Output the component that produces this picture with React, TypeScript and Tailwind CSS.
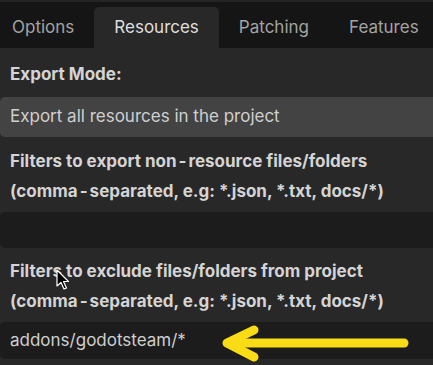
import React from 'react';

const tabs = ['Options', 'Resources', 'Patching', 'Features'];

const Hyphen = () => <span className="mx-[2px]">-</span>;

export default function App() {
  return (
    <div
      className="relative h-[365px] w-[433px] overflow-hidden bg-[#282828] text-[17px]"
      style={{ fontFamily: 'Inter, "Noto Sans", sans-serif' }}
    >
      {/* tab strip */}
      <div className="h-[2px] bg-[#242424]" />
      <div className="flex h-[46px] items-end bg-[#151515]">
        {tabs.map((t, i) =>
          t === 'Resources' ? (
            <div
              key={t}
              className="flex h-[41px] items-center whitespace-nowrap rounded-t-[5px] bg-[#282828] px-[20px] text-[#dedede]"
            >
              {t}
            </div>
          ) : (
            <div
              key={t}
              className={`flex h-[41px] items-center whitespace-nowrap px-[20px] text-[#a3a3a3] ${i === 0 ? '-ml-[8px]' : ''}`}
            >
              {t}
            </div>
          )
        )}
      </div>

      {/* content */}
      <div className="flex flex-col pt-[11px]">
        <div className="px-[10px] font-bold leading-[30px] text-[#d4d4d4]">Export Mode:</div>
        <div className="mt-[8px] flex h-[40px] items-center rounded-l-[5px] bg-[#434343] px-[10px] text-[#cfcfcf]">
          Export all resources in the project
        </div>

        <div className="mt-[9px] px-[10px] font-bold leading-[30px] text-[#d4d4d4]">
          <div>
            Filters to export non<Hyphen />resource files/folders
          </div>
          <div>
            (comma<Hyphen />separated, e.g: *.json, *.txt, docs/*)
          </div>
        </div>
        <div className="mt-[6px] h-[36px] rounded-l-[5px] bg-[#1c1c1c]" />

        <div className="mt-[8px] px-[10px] font-bold leading-[30px] text-[#d4d4d4]">
          <div>Filters to exclude files/folders from project</div>
          <div>
            (comma<Hyphen />separated, e.g: *.json, *.txt, docs/*)
          </div>
        </div>
        <div className="mt-[6px] flex h-[37px] items-center rounded-l-[5px] bg-[#1c1c1c] px-[10px] text-[#cfcfcf]">
          addons/godotsteam/*
        </div>
      </div>

      {/* mouse cursor */}
      <svg className="absolute left-[56px] top-[269px]" width="14" height="22" viewBox="0 0 14 22">
        <path
          d="M1 1 L1 17 L5 13.5 L8 20 L10.5 19 L7.5 12.5 L12.5 12.5 Z"
          fill="#000"
          stroke="#fff"
          strokeWidth="1.2"
          strokeLinejoin="round"
        />
      </svg>

      {/* annotation arrow */}
      <svg className="pointer-events-none absolute left-0 top-0" width="433" height="365">
        <g stroke="#f9dc16" strokeWidth="9" strokeLinecap="round" strokeLinejoin="round" fill="none">
          <line x1="404" y1="343" x2="230" y2="343" />
          <polyline points="254,330 227,343 254,357" />
        </g>
      </svg>
    </div>
  );
}
